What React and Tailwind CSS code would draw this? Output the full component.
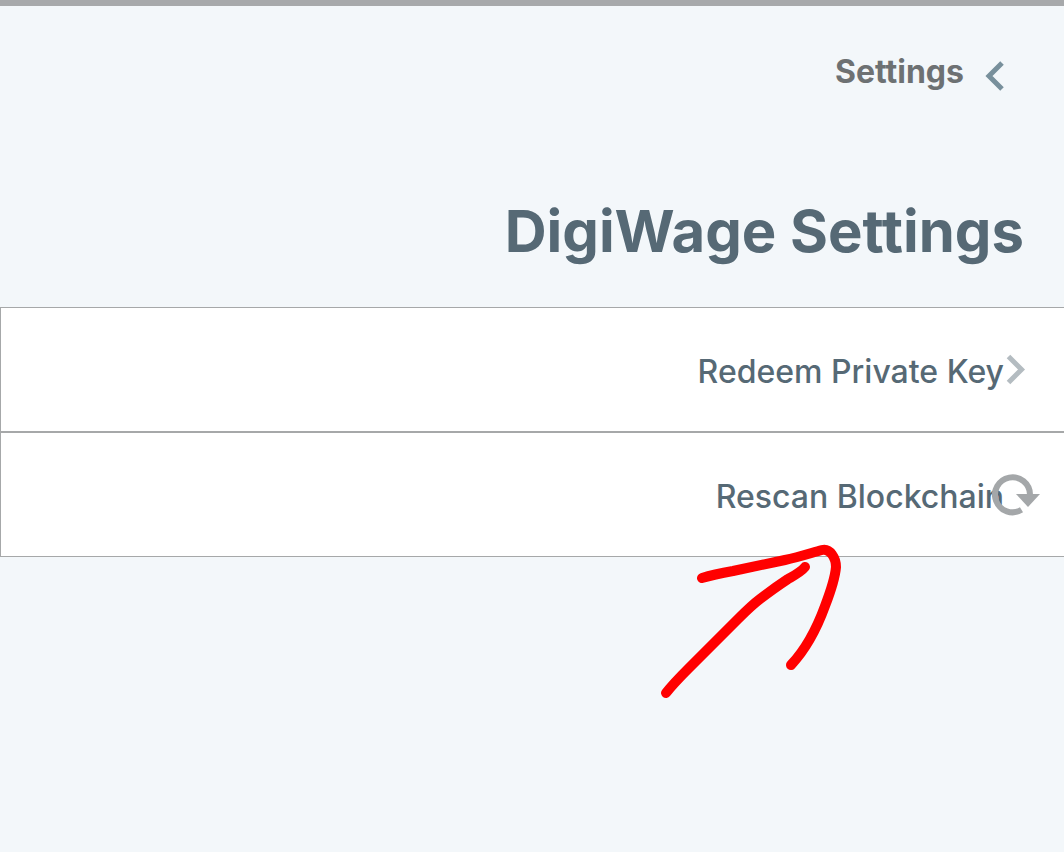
import React from 'react';

const ChevronLeftIcon = () => (
  <svg className="h-8 w-5" viewBox="0 0 20 32" fill="none" stroke="#78909c" strokeWidth="5" aria-hidden="true">
    <path d="M18 3L5 16L18 29" />
  </svg>
);

const ChevronRightIcon = () => (
  <svg className="h-8 w-5" viewBox="0 0 20 32" fill="none" stroke="#b4bcc1" strokeWidth="5" aria-hidden="true">
    <path d="M2.5 2.5L15.5 15.5L2.5 28.5" />
  </svg>
);

const RescanIcon = () => (
  <svg className="h-11 w-12" viewBox="0 0 48 44" aria-hidden="true">
    <path
      d="M38 21.5A17.5 17.5 0 1 0 29.5 36.8"
      fill="none"
      stroke="#a4a7a9"
      strokeWidth="6"
    />
    <path d="M24 21H48L36 34Z" fill="#a4a7a9" />
  </svg>
);

const items = [
  { label: 'Redeem Private Key', icon: <ChevronRightIcon />, iconClass: 'right-[38px]' },
  { label: 'Rescan Blockchain', icon: <RescanIcon />, iconClass: 'right-6' },
];

const SettingsList = () => (
  <ul>
    {items.map((item) => (
      <li key={item.label}>
        <button
          type="button"
          className="relative flex h-[125px] w-full items-center justify-end border-y border-l border-[#a6a8a9] bg-white pr-[60px] text-[32px] font-medium leading-10 text-[#566975]"
        >
          <span className="pt-1">{item.label}</span>
          <span className={`absolute ${item.iconClass}`}>{item.icon}</span>
        </button>
      </li>
    ))}
  </ul>
);

// Hand-drawn arrow pointing at the rescan row
const ArrowMark = () => (
  <svg
    className="pointer-events-none absolute right-[214px] top-[233px] h-[170px] w-[200px]"
    viewBox="650 540 200 170"
    fill="none"
    stroke="#ff0000"
    strokeWidth="10"
    strokeLinecap="round"
    strokeLinejoin="round"
    aria-hidden="true"
  >
    <path d="M702 578C712 575 722 573 733 571L785 560C799 557 811 553 822 550C830 548 836 558 836 567C835 579 830 593 825 606C817 628 806 649 791 665" />
    <path d="M666 693C673 684 681 676 689 668L738 619C746 611 752 605 760 599C769 592 779 585 788 579C795 575 801 572 805 567" />
  </svg>
);

const App = () => {
  return (
    <div className="min-h-screen border-t-[6px] border-[#a7a9ab] bg-[#f3f7fa] font-['Inter','Liberation_Sans',sans-serif]">
      <header>
        <nav className="flex justify-end pr-[60px] pt-[46px]">
          <a href="#settings" className="flex items-center gap-5 text-[32px] font-bold leading-10 text-[#6d7173]">
            Settings
            <span className="pt-2">
              <ChevronLeftIcon />
            </span>
          </a>
        </nav>
        <h1 className="pb-10 pr-10 pt-[103px] text-right text-[58px] font-bold leading-[72px] text-[#566975]">
          DigiWage Settings
        </h1>
      </header>
      <main className="relative">
        <SettingsList />
        <ArrowMark />
      </main>
    </div>
  );
};

export default App;
